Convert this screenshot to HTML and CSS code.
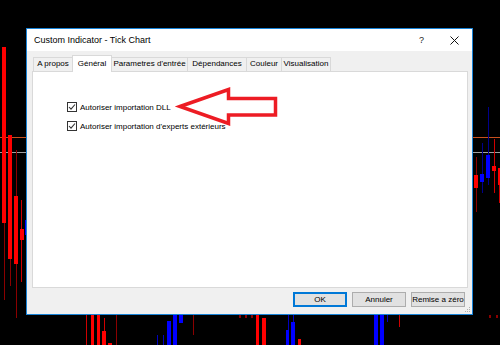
FILE: index.html
```html
<!DOCTYPE html>
<html lang="fr">
<head>
    <meta charset="UTF-8">
    <meta name="viewport" content="width=device-width, initial-scale=1.0">
    <title>Custom Indicator - Tick Chart</title>
    <link rel="stylesheet" href="styles.css">
</head>
<body>
    <div class="desk">
        <!-- chart behind the dialog -->
        <svg class="chart" width="500" height="345" viewBox="0 0 500 345">
            <rect x="0" y="137" width="500" height="1" fill="#c8501e"/>
            <rect x="0" y="152" width="500" height="1" fill="#a0a0a0"/>

            <!-- left side -->
            <rect x="4" y="47" width="1" height="253" fill="#8b0000"/>
            <rect x="2" y="47" width="4" height="176" fill="#ff0000"/>
            <rect x="10" y="135" width="1" height="151" fill="#8b0000"/>
            <rect x="8" y="135" width="4" height="124" fill="#ff0000"/>
            <rect x="16" y="150" width="1" height="168" fill="#8b0000"/>
            <rect x="14" y="196" width="4" height="68" fill="#ff0000"/>
            <rect x="21" y="200" width="1" height="82" fill="#d00000"/>
            <rect x="20" y="229" width="4" height="11" fill="#ff0000"/>
            <rect x="25" y="220" width="2" height="15" fill="#0000ff"/>

            <!-- bottom -->
            <rect x="86" y="315" width="1" height="30" fill="#d00000"/>
            <rect x="91" y="315" width="3" height="30" fill="#ff0000"/>
            <rect x="97" y="315" width="3" height="30" fill="#ff0000"/>
            <rect x="104" y="318" width="1" height="27" fill="#d00000"/>
            <rect x="102" y="331" width="4" height="14" fill="#ff0000"/>
            <rect x="108" y="343" width="4" height="2" fill="#ff0000"/>
            <rect x="116" y="315" width="1" height="30" fill="#8b0000"/>
            <rect x="157" y="335" width="1" height="10" fill="#0000c0"/>
            <rect x="163" y="335" width="1" height="10" fill="#0000c0"/>
            <rect x="167" y="321" width="4" height="24" fill="#0000ff"/>
            <rect x="173" y="315" width="4" height="30" fill="#0000ff"/>
            <rect x="179" y="315" width="4" height="8" fill="#0000ff"/>
            <rect x="193" y="315" width="1" height="20" fill="#8b0000"/>
            <rect x="239" y="315" width="2" height="3" fill="#8b0000"/>
            <rect x="245" y="315" width="2" height="3" fill="#8b0000"/>
            <rect x="251" y="315" width="2" height="3" fill="#8b0000"/>
            <rect x="256" y="315" width="3" height="30" fill="#ff0000"/>
            <rect x="262" y="318" width="4" height="27" fill="#ff0000"/>
            <rect x="288" y="315" width="1" height="30" fill="#0000c0"/>
            <rect x="293" y="315" width="1" height="10" fill="#0000c0"/>
            <rect x="286" y="330" width="3" height="15" fill="#0000ff"/>
            <rect x="291" y="322" width="4" height="23" fill="#0000ff"/>
            <rect x="298" y="339" width="3" height="6" fill="#ff0000"/>
            <rect x="374" y="315" width="4" height="30" fill="#0000ff"/>
            <rect x="380" y="315" width="4" height="30" fill="#0000ff"/>
            <rect x="387" y="315" width="1" height="7" fill="#0000c0"/>
            <rect x="399" y="315" width="1" height="12" fill="#d00000"/>
            <rect x="489" y="315" width="2" height="3" fill="#8b0000"/>
            <rect x="496" y="315" width="2" height="3" fill="#8b0000"/>

            <!-- right side -->
            <rect x="476" y="157" width="1" height="55" fill="#8b0000"/>
            <rect x="474" y="175" width="4" height="13" fill="#ff0000"/>
            <rect x="482" y="143" width="1" height="50" fill="#00008b"/>
            <rect x="480" y="174" width="4" height="8" fill="#0000ff"/>
            <rect x="488" y="107" width="1" height="78" fill="#00008b"/>
            <rect x="486" y="155" width="4" height="23" fill="#0000ff"/>
            <rect x="494" y="139" width="1" height="54" fill="#d00000"/>
            <rect x="492" y="166" width="4" height="5" fill="#ff0000"/>
            <rect x="499" y="168" width="1" height="35" fill="#d00000"/>
            <rect x="498" y="168" width="2" height="17" fill="#ff0000"/>
        </svg>

        <div class="dialog">
            <div class="titlebar">
                <span class="title">Custom Indicator - Tick Chart</span>
                <span class="help">?</span>
                <svg class="close" width="9" height="9" viewBox="0 0 9 9">
                    <path d="M0.5 0.5 L8.5 8.5 M8.5 0.5 L0.5 8.5" stroke="#111" stroke-width="1" fill="none"/>
                </svg>
            </div>
            <div class="content">
                <div class="tabs">
                    <div class="tab w-apropos">A propos</div>
                    <div class="tab w-general active">Général</div>
                    <div class="tab w-params">Parametres d'entrée</div>
                    <div class="tab w-deps">Dépendances</div>
                    <div class="tab w-color">Couleur</div>
                    <div class="tab w-visu">Visualisation</div>
                </div>
                <div class="panel">
                    <div class="opt">
                        <span class="box"><svg width="8" height="8" viewBox="0 0 8 8"><path d="M1 4 L3 6.2 L7 1.5" stroke="#333" stroke-width="1.1" fill="none"/></svg></span>
                        <span>Autoriser importation DLL</span>
                    </div>
                    <div class="opt">
                        <span class="box"><svg width="8" height="8" viewBox="0 0 8 8"><path d="M1 4 L3 6.2 L7 1.5" stroke="#333" stroke-width="1.1" fill="none"/></svg></span>
                        <span>Autoriser importation d'experts extérieurs</span>
                    </div>
                </div>
                <div class="buttons">
                    <button class="btn default">OK</button>
                    <button class="btn">Annuler</button>
                    <button class="btn">Remise a zéro</button>
                </div>
            </div>
            <svg class="grip" width="6" height="6" viewBox="0 0 6 6">
                <rect x="4" y="0" width="1" height="1" fill="#b0b0b0"/>
                <rect x="2" y="2" width="1" height="1" fill="#b0b0b0"/>
                <rect x="4" y="2" width="1" height="1" fill="#b0b0b0"/>
                <rect x="0" y="4" width="1" height="1" fill="#b0b0b0"/>
                <rect x="2" y="4" width="1" height="1" fill="#b0b0b0"/>
                <rect x="4" y="4" width="1" height="1" fill="#b0b0b0"/>
            </svg>
        </div>

        <!-- red annotation arrow -->
        <svg class="arrow" width="500" height="345" viewBox="0 0 500 345">
            <polygon points="180,106.5 228.5,89.5 228.5,98.5 275.5,98.5 275.5,115 228.5,115 228.5,123.5" fill="none" stroke="#ed1c24" stroke-width="3.5" stroke-linejoin="miter"/>
        </svg>
    </div>
</body>
</html>
```

FILE: styles.css
```css
body { margin: 0; background: #000; font-family: "Liberation Sans", Arial, sans-serif; }
.desk { position: relative; width: 500px; height: 345px; overflow: hidden; background: #000; padding: 28px 0 0 26px; box-sizing: border-box; }
.chart { position: absolute; left: 0; top: 0; }
.arrow { position: absolute; left: 0; top: 0; pointer-events: none; }

.dialog { position: relative; width: 447px; height: 287px; box-sizing: border-box; border: 1px solid #1883d7; background: #f0f0f0; display: flex; flex-direction: column; }
.titlebar { height: 22px; background: #fff; display: flex; align-items: center; padding-left: 7px; font-size: 9px; color: #000; }
.title { flex: 1; }
.help { font-size: 9px; margin-right: 26px; color: #222; }
.close { margin-right: 13px; }

.content { flex: 1; display: flex; flex-direction: column; padding: 4px 4px 0 5px; }
.tabs { height: 16px; display: flex; align-items: flex-end; padding-left: 1px; }
.tab { height: 14px; box-sizing: border-box; border: 1px solid #d9d9d9; border-bottom: none; background: #f0f0f0; font-size: 8px; line-height: 12px; text-align: center; margin-left: -1px; white-space: nowrap; color: #000; }
.tab:first-child { margin-left: 0; }
.tab.active { height: 17px; background: #fff; margin-bottom: -1px; position: relative; z-index: 1; line-height: 15px; }
.w-apropos { width: 40px; }
.w-general { width: 40px; }
.w-params { width: 77px; }
.w-deps { width: 60px; }
.w-color { width: 36px; }
.w-visu { width: 50px; }

.panel { height: 217px; box-sizing: border-box; background: #fff; border: 1px solid #d9d9d9; padding: 30px 0 0 34px; }
.opt { display: flex; align-items: center; height: 10px; margin-bottom: 9px; font-size: 8px; color: #000; }
.box { width: 10px; height: 10px; box-sizing: border-box; border: 1px solid #333; background: #fff; display: flex; align-items: center; justify-content: center; margin-right: 3px; }

.buttons { display: flex; justify-content: flex-end; gap: 5px; padding: 4px 3px 0 0; }
.btn { width: 54px; height: 15px; box-sizing: border-box; border: 1px solid #adadad; background: #e1e1e1; font-family: "Liberation Sans", Arial, sans-serif; font-size: 8px; padding: 0; color: #000; }
.btn.default { border: 1px solid #0078d7; box-shadow: inset 0 0 0 1px #0078d7; }
.grip { position: absolute; right: 1px; bottom: 1px; }
```
